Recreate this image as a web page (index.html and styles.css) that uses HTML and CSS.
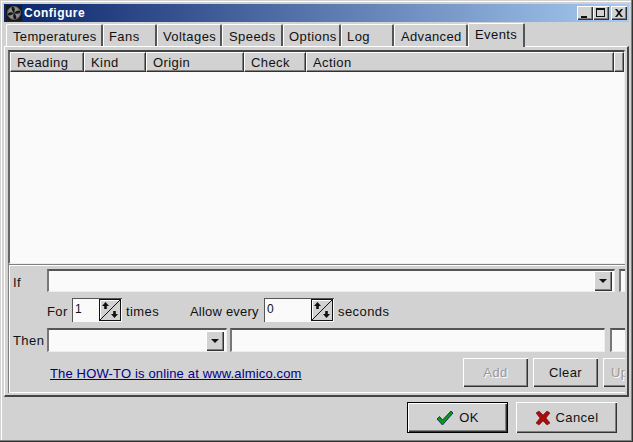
FILE: index.html
```
<!DOCTYPE html>
<html lang="en">
<head>
<meta charset="utf-8">
<title>Configure</title>
<link rel="stylesheet" href="styles.css">
</head>
<body>
<div class="window">
  <div class="titlebar">
    <svg class="app-icon" width="16" height="16" viewBox="0 0 16 16">
      <rect width="16" height="16" fill="#1a1a1a"/>
      <circle cx="8" cy="8" r="6.500" fill="#8c8c8c" stroke="#555"/>
      <path d="M8 8C6 6 5 4 6 2 8 1.500 10 3 8 8ZM8 8C10 6 12 5 14 6 14.500 8 13 10 8 8ZM8 8C10 10 11 12 10 14 8 14.500 6 13 8 8ZM8 8C6 10 4 11 2 10 1.500 8 3 6 8 8Z" fill="#161616"/>
    </svg>
    <span class="title-text">Configure</span>
    <div class="caption-buttons">
      <button class="cap-btn"><svg width="14" height="12" viewBox="0 0 14 12"><rect x="3" y="9" width="6" height="2"/></svg></button>
      <button class="cap-btn"><svg width="14" height="12" viewBox="0 0 14 12"><path d="M2 1h9v9H2z M3 3v6h7V3z" fill-rule="evenodd"/></svg></button>
      <button class="cap-btn cap-close"><svg width="14" height="12" viewBox="0 0 14 12"><path d="M3 2h2l2 2.500L9 2h2L8 6l3 4H9L7 7.500 5 10H3l3-4z"/></svg></button>
    </div>
  </div>

  <div class="tabs">
    <div class="tab w-temp">Temperatures</div>
    <div class="tab w-fans">Fans</div>
    <div class="tab w-volt">Voltages</div>
    <div class="tab w-speed">Speeds</div>
    <div class="tab w-opt">Options</div>
    <div class="tab w-log">Log</div>
    <div class="tab w-adv">Advanced</div>
    <div class="tab tab-active">Events</div>
  </div>

  <div class="page">
    <div class="list">
      <div class="list-head">
        <div class="col c-reading">Reading</div>
        <div class="col c-kind">Kind</div>
        <div class="col c-origin">Origin</div>
        <div class="col c-check">Check</div>
        <div class="col c-action">Action</div>
        <div class="col c-fill"></div>
      </div>
      <div class="list-body"></div>
    </div>

    <div class="form">
      <div class="row row-if">
        <span class="label">If</span>
        <div class="field combo combo-if"><span class="drop"><i class="tri"></i></span></div>
        <div class="field stub"></div>
      </div>
      <div class="row row-for">
        <span class="txt for-label">For</span>
        <div class="spin spin-a">
          <span class="spin-val">1</span>
          <svg class="spin-btn" width="22" height="22" viewBox="0 0 22 22">
            <rect x=".5" y=".5" width="21" height="21" fill="#d2d2d2" stroke="#111"/>
            <path d="M1.500 20V1.500H20" fill="none" stroke="#fff"/>
            <path d="M1 21L21 1" fill="none" stroke="#111"/>
            <path d="M6.500 3l3.500 4H7.800v3H5.200V7H3zM15.500 19L12 15h2.200v-3h2.600v3H19z" fill="#111"/>
          </svg>
        </div>
        <span class="txt times-label">times</span>
        <span class="txt allow-label">Allow every</span>
        <div class="spin spin-b">
          <span class="spin-val">0</span>
          <svg class="spin-btn" width="22" height="22" viewBox="0 0 22 22">
            <rect x=".5" y=".5" width="21" height="21" fill="#d2d2d2" stroke="#111"/>
            <path d="M1.500 20V1.500H20" fill="none" stroke="#fff"/>
            <path d="M1 21L21 1" fill="none" stroke="#111"/>
            <path d="M6.500 3l3.500 4H7.800v3H5.200V7H3zM15.500 19L12 15h2.200v-3h2.600v3H19z" fill="#111"/>
          </svg>
        </div>
        <span class="txt seconds-label">seconds</span>
      </div>
      <div class="row row-then">
        <span class="label then-label">Then</span>
        <div class="field combo combo-then"><span class="drop"><i class="tri"></i></span></div>
        <div class="field then-text"></div>
        <div class="field stub then-stub"></div>
      </div>
      <div class="row row-actions">
        <a class="link" href="#">The HOW-TO is online at www.almico.com</a>
        <button class="btn btn-sm btn-add" disabled>Add</button>
        <button class="btn btn-sm">Clear</button>
        <button class="btn btn-sm btn-update" disabled>Update</button>
      </div>
    </div>
  </div>

  <div class="footer">
    <button class="btn btn-lg btn-default">
      <svg width="18" height="16" viewBox="0 0 18 16"><path d="M1 9l2.500-2.500L6.500 10 15 1l2 2L6.500 15z" fill="#0a9a10" stroke="#06186a" stroke-width=".8"/></svg>
      OK
    </button>
    <button class="btn btn-lg">
      <svg width="16" height="16" viewBox="0 0 16 16"><path d="M1 3l3-2 4 4 4-4 3 2-4 5 4 5-3 2-4-4-4 4-3-2 4-5z" fill="#a80c0c" stroke="#6a1010" stroke-width=".6"/></svg>
      Cancel
    </button>
  </div>
</div>
</body>
</html>
```

FILE: styles.css
```
* { box-sizing: border-box; }

html, body {
  margin: 0;
  padding: 0;
  width: 633px;
  height: 442px;
  overflow: hidden;
}

body {
  font-family: "Liberation Sans", Arial, sans-serif;
  font-size: 13px;
  color: #111;
  background: #d2d2d2;
}

.window {
  width: 633px;
  height: 442px;
  padding: 4px;
  background: #d2d2d2;
  box-shadow: inset -1px -1px 0 #333, inset -2px -2px 0 #808080, inset 1px 1px 0 #d2d2d2, inset 2px 2px 0 #fff;
  display: flex;
  flex-direction: column;
}

.titlebar {
  height: 18px;
  flex: none;
  display: flex;
  align-items: center;
  padding: 0 2px;
  background: linear-gradient(90deg, #0a246a 0%, #a6caf0 100%);
  color: #fff;
}

.app-icon { flex: none; }

.title-text {
  margin-left: 2px;
  font-weight: 700;
  font-size: 12px;
  letter-spacing: .5px;
}

.caption-buttons {
  margin-left: auto;
  display: flex;
}

.cap-btn {
  width: 16px;
  height: 14px;
  padding: 0;
  border: 0;
  background: #d2d2d2;
  box-shadow: inset 1px 1px 0 #fff, inset -1px -1px 0 #333, inset -2px -2px 0 #808080;
  display: flex;
  align-items: center;
  justify-content: center;
}

.cap-btn svg { fill: #111; }
.cap-close { margin-left: 2px; }

.tabs {
  flex: none;
  height: 24px;
  display: flex;
  align-items: flex-end;
  padding-left: 2px;
  position: relative;
  z-index: 1;
}

.tab {
  height: 22px;
  padding: 4px 0 0 5px;
  flex: none;
  white-space: nowrap;
  letter-spacing: .42px;
  border-left: 1px solid #fff;
  border-top: 1px solid #fff;
  border-right: 2px solid #555;
  border-radius: 2px 2px 0 0;
}

.w-temp { width: 97px; padding-left: 6px; letter-spacing: .34px; }
.w-fans { width: 54px; }
.w-volt { width: 65px; }
.w-speed { width: 61px; padding-left: 6px; }
.w-opt { width: 58px; }
.w-log { width: 53px; }
.w-adv { width: 74px; padding-left: 6px; letter-spacing: .34px; }

.tab-active {
  width: 57px;
  height: 24px;
  margin-bottom: -1px;
  padding: 3px 0 0 6px;
  background: #d2d2d2;
}

.page {
  flex: none;
  height: 351px;
  padding: 3px 2px 2px 3px;
  border-top: 1px solid #fff;
  border-left: 1px solid #fff;
  border-right: 2px solid #444;
  border-bottom: 2px solid #444;
  display: flex;
  flex-direction: column;
}

.list {
  flex: none;
  height: 214px;
  background: #fafafa;
  border-top: 2px solid #444;
  border-left: 2px solid #666;
  border-right: 1px solid #eee;
  border-bottom: 1px solid #eee;
  display: flex;
  flex-direction: column;
}

.list-head {
  height: 20px;
  flex: none;
  display: flex;
  background: #d2d2d2;
}

.col {
  flex: none;
  padding: 2px 0 0 6px;
  letter-spacing: .42px;
  border-top: 1px solid #fff;
  border-left: 1px solid #fff;
  border-right: 1px solid #333;
  border-bottom: 1px solid #333;
  box-shadow: inset -1px -1px 0 #808080;
}

.c-reading { width: 74px; }
.c-kind { width: 62px; }
.c-origin { width: 98px; }
.c-check { width: 62px; }
.c-action { width: 308px; }
.c-fill { flex: 1; }

.list-body { flex: 1; }

.form {
  flex: none;
  height: 129px;
  overflow: hidden;
  padding: 4px 0 0 4px;
  border-top: 1px solid #808080;
  border-left: 1px solid #808080;
  box-shadow: inset 0 1px 0 #fff, inset 1px 0 0 #fff, inset 0 -1px 0 #fff;
}

.row {
  display: flex;
  align-items: center;
  flex-wrap: nowrap;
}

.row > * { flex: none; }

.row-if { height: 23px; }
.row-for { height: 24px; margin-top: 6px; }
.row-then { height: 24px; margin-top: 6px; }
.row-actions { height: 29px; margin-top: 6px; }

.label { width: 34px; letter-spacing: .42px; }
.row-if .label { padding-top: 3px; }

.txt { letter-spacing: .42px; padding-top: 2px; }

.field {
  height: 100%;
  background: #fafafa;
  border-top: 2px solid #555;
  border-left: 2px solid #777;
  border-right: 1px solid #eee;
  border-bottom: 1px solid #eee;
}

.combo {
  display: flex;
  justify-content: flex-end;
  align-items: center;
  padding-right: 2px;
}

.combo-if { width: 568px; }
.combo-then { width: 180px; }
.then-text { width: 375px; margin-left: 3px; }
.stub { width: 20px; margin-left: 4px; }
.then-stub { margin-left: 5px; }

.drop {
  width: 18px;
  height: 20px;
  background: #d2d2d2;
  box-shadow: inset 1px 1px 0 #fff, inset -1px -1px 0 #333, inset -2px -2px 0 #808080;
  display: flex;
  align-items: center;
  justify-content: center;
}

.tri {
  width: 0;
  height: 0;
  border-left: 4px solid transparent;
  border-right: 4px solid transparent;
  border-top: 4px solid #111;
}

.for-label { margin-left: 34px; width: 25px; }
.times-label { margin-left: 4px; width: 64px; }
.allow-label { width: 74px; letter-spacing: .2px; }

.spin {
  height: 24px;
  display: flex;
  align-items: flex-start;
  justify-content: space-between;
  background: #fafafa;
  border-top: 1px solid #555;
  border-left: 1px solid #555;
  padding: 0 1px 0 2px;
  font-size: 12px;
}

.spin-val { margin-top: 3px; }
.spin-a { width: 50px; }
.spin-b { width: 70px; }
.seconds-label { margin-left: 4px; }

.spin-btn { flex: none; }

.link {
  margin-left: 37px;
  width: 413px;
  padding-top: 2px;
  color: #00008b;
  letter-spacing: .15px;
}

.btn {
  font-family: inherit;
  font-size: 13px;
  color: #111;
  background: #d2d2d2;
  padding: 0;
  border: 0;
  box-shadow: inset 1px 1px 0 #fff, inset -1px -1px 0 #333, inset -2px -2px 0 #808080;
  letter-spacing: .42px;
}

.btn-sm {
  width: 65px;
  height: 29px;
  margin-right: 5px;
}

.btn[disabled] {
  color: #999;
  text-shadow: 1px 1px 0 #fff;
}

.btn-update { text-align: left; padding-left: 8px; }

.footer {
  flex: 1;
  display: flex;
  justify-content: flex-end;
  align-items: flex-start;
  padding: 5px 12px 0 0;
  gap: 8px;
}

.btn-lg {
  width: 101px;
  height: 31px;
  display: flex;
  align-items: center;
  justify-content: center;
  gap: 5px;
}

.btn-default {
  border: 1px solid #000;
}
```
